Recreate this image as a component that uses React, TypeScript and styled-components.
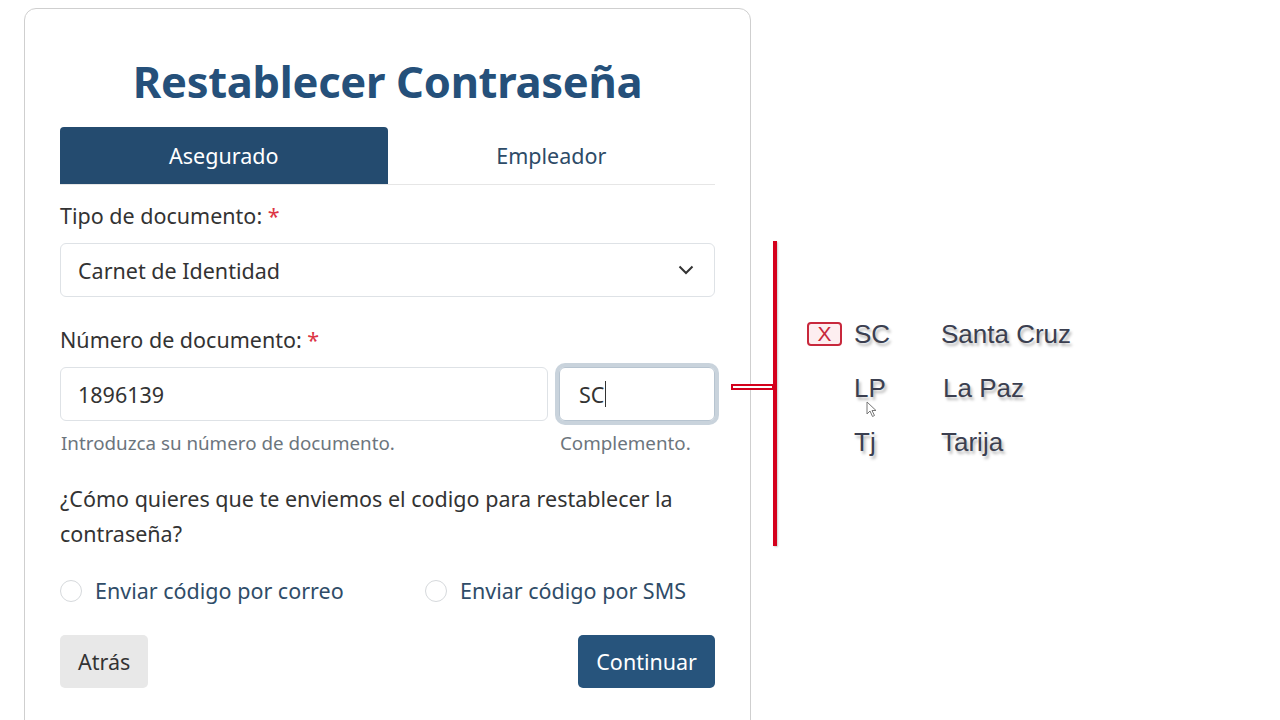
import React from "react"
import styled, { createGlobalStyle } from "styled-components"

const GlobalStyle = createGlobalStyle`
  html, body {
    margin: 0;
    padding: 0;
    background: #fff;
  }
  body {
    font-family: "Noto Sans", "Open Sans", sans-serif;
    color: #212529;
    overflow: hidden;
  }
`

const blue = "#25507a"

const Page = styled.div`
  display: flex;
  align-items: flex-start;
  padding: 8px 0 0 24px;
  height: 712px;
  overflow: hidden;
`

const Card = styled.div`
  width: 727px;
  box-sizing: border-box;
  border: 1px solid #cfcfcf;
  border-radius: 12px;
  padding: 44px 35px 60px;
  background: #fff;
`

const Title = styled.h1`
  margin: 0;
  text-align: center;
  font-size: 43.5px;
  line-height: 56px;
  font-weight: 700;
  letter-spacing: -0.3px;
  color: ${blue};
`

const Tabs = styled.div`
  display: flex;
  margin-top: 18px;
  border-bottom: 1px solid #e6e6e6;
`

const Tab = styled.div<{ $active?: boolean }>`
  flex: 1;
  height: 57px;
  display: flex;
  align-items: center;
  justify-content: center;
  font-size: 21.5px;
  border-radius: 4px 4px 0 0;
  background: ${p => (p.$active ? "#244b6f" : "transparent")};
  color: ${p => (p.$active ? "#fff" : "#2d4b67")};
`

const Label = styled.div<{ $top: number }>`
  margin-top: ${p => p.$top}px;
  margin-bottom: 12px;
  height: 30px;
  font-size: 21.5px;
  line-height: 30px;
  color: #333;
`

const Req = styled.span`
  color: #dc3545;
`

const Select = styled.div`
  height: 54px;
  box-sizing: border-box;
  border: 1px solid #dee2e6;
  border-radius: 6px;
  display: flex;
  align-items: center;
  justify-content: space-between;
  padding: 0 20px 0 17px;
  font-size: 21.5px;
  color: #333;
`

const InputRow = styled.div`
  display: flex;
  gap: 11px;
`

const Field = styled.div<{ $w: number }>`
  width: ${p => p.$w}px;
  display: flex;
  flex-direction: column;
`

const Input = styled.div<{ $focus?: boolean }>`
  height: 54px;
  box-sizing: border-box;
  border: 1px solid ${p => (p.$focus ? "#b7c4d0" : "#dee2e6")};
  border-radius: 6px;
  display: flex;
  align-items: center;
  padding-left: ${p => (p.$focus ? 19 : 17)}px;
  font-size: 21.5px;
  color: #333;
  box-shadow: ${p => (p.$focus ? "0 0 0 4px #c9d3dc" : "none")};
`

const Caret = styled.span`
  display: inline-block;
  width: 1px;
  height: 26px;
  background: #333;
  margin-left: 1px;
`

const Help = styled.div`
  margin-top: 10px;
  font-size: 18.8px;
  line-height: 24px;
  color: #6c757d;
  padding-left: 1px;
`

const Question = styled.p`
  margin: 26px 0 0;
  font-size: 21.5px;
  line-height: 35px;
  color: #333;
`

const Radios = styled.div`
  display: flex;
  margin-top: 25px;
`

const RadioOption = styled.label<{ $w?: number }>`
  display: flex;
  align-items: center;
  gap: 13px;
  width: ${p => (p.$w ? `${p.$w}px` : "auto")};
  font-size: 21.5px;
  line-height: 30px;
  color: #2f4c68;
`

const Circle = styled.span`
  width: 22px;
  height: 22px;
  box-sizing: border-box;
  border: 1px solid #d6d9dc;
  border-radius: 50%;
  background: #fff;
`

const Actions = styled.div`
  display: flex;
  justify-content: space-between;
  margin-top: 29px;
`

const Button = styled.button<{ $primary?: boolean }>`
  height: 53px;
  border: none;
  border-radius: 5px;
  padding: 0 18px;
  font-family: inherit;
  font-size: 21.5px;
  background: ${p => (p.$primary ? "#27547c" : "#e8e8e8")};
  color: ${p => (p.$primary ? "#fff" : "#333")};
`

/* annotation on the right */

const Side = styled.div`
  position: relative;
  display: flex;
  margin: 233px 0 0 22px;
`

const RedLine = styled.div`
  width: 4px;
  height: 305px;
  background: #d4001c;
  box-shadow: 1px 1px 2px rgba(0, 0, 0, 0.2);
`

const Connector = styled.div`
  position: absolute;
  left: -42px;
  top: 143px;
  width: 43px;
  height: 6px;
  box-sizing: border-box;
  border: 2px solid #d4001c;
  background: #fff;
`

const List = styled.div`
  position: relative;
  margin-left: 30px;
  padding-top: 66px;
`

const Row = styled.div`
  display: grid;
  grid-template-columns: 35px 75px auto;
  column-gap: 12px;
  align-items: center;
  height: 54px;
  font-family: "Liberation Sans", Arial, sans-serif;
  font-size: 26px;
  color: #3b3f50;
  text-shadow: 2px 3px 3px rgba(0, 0, 0, 0.28);
`

const XBox = styled.span`
  width: 35px;
  height: 24px;
  box-sizing: border-box;
  border: 2px solid #c8283c;
  border-radius: 4px;
  background: #fdeef0;
  color: #c8283c;
  font-size: 21px;
  line-height: 20px;
  text-align: center;
  text-shadow: none;
`

const Name = styled.span<{ $shift?: number }>`
  margin-left: ${p => p.$shift || 0}px;
`

const Pointer = styled.svg`
  position: absolute;
  left: 59px;
  top: 160px;
`

const Chevron = () => (
  <svg width="16" height="10" viewBox="0 0 16 10">
    <polyline points="1.5,1.5 8,8 14.5,1.5" fill="none" stroke="#333" strokeWidth="2" />
  </svg>
)

const regions = [
  { code: "SC", name: "Santa Cruz", marked: true },
  { code: "LP", name: "La Paz", shift: 2 },
  { code: "Tj", name: "Tarija" },
]

export default function App() {
  return (
    <>
      <GlobalStyle />
      <Page>
        <Card>
          <Title>Restablecer Contraseña</Title>
          <Tabs>
            <Tab $active>Asegurado</Tab>
            <Tab>Empleador</Tab>
          </Tabs>

          <Label $top={16}>
            Tipo de documento: <Req>*</Req>
          </Label>
          <Select>
            <span>Carnet de Identidad</span>
            <Chevron />
          </Select>

          <Label $top={28}>
            Número de documento: <Req>*</Req>
          </Label>
          <InputRow>
            <Field $w={488}>
              <Input>1896139</Input>
              <Help>Introduzca su número de documento.</Help>
            </Field>
            <Field $w={156}>
              <Input $focus>
                SC<Caret />
              </Input>
              <Help>Complemento.</Help>
            </Field>
          </InputRow>

          <Question>
            ¿Cómo quieres que te enviemos el codigo para restablecer la contraseña?
          </Question>

          <Radios>
            <RadioOption $w={365}>
              <Circle />
              Enviar código por correo
            </RadioOption>
            <RadioOption>
              <Circle />
              Enviar código por SMS
            </RadioOption>
          </Radios>

          <Actions>
            <Button>Atrás</Button>
            <Button $primary>Continuar</Button>
          </Actions>
        </Card>

        <Side>
          <Connector />
          <RedLine />
          <List>
            {regions.map(r => (
              <Row key={r.code}>
                {r.marked ? <XBox>X</XBox> : <span />}
                <span>{r.code}</span>
                <Name $shift={r.shift}>{r.name}</Name>
              </Row>
            ))}
            <Pointer width="11" height="17" viewBox="0 0 11 17">
              <path d="M1 1 L1 13 L4 10 L6.5 15.5 L8.5 14.5 L6 9.5 L10 9.5 Z" fill="#fff" stroke="#777" strokeWidth="1" />
            </Pointer>
          </List>
        </Side>
      </Page>
    </>
  )
}
